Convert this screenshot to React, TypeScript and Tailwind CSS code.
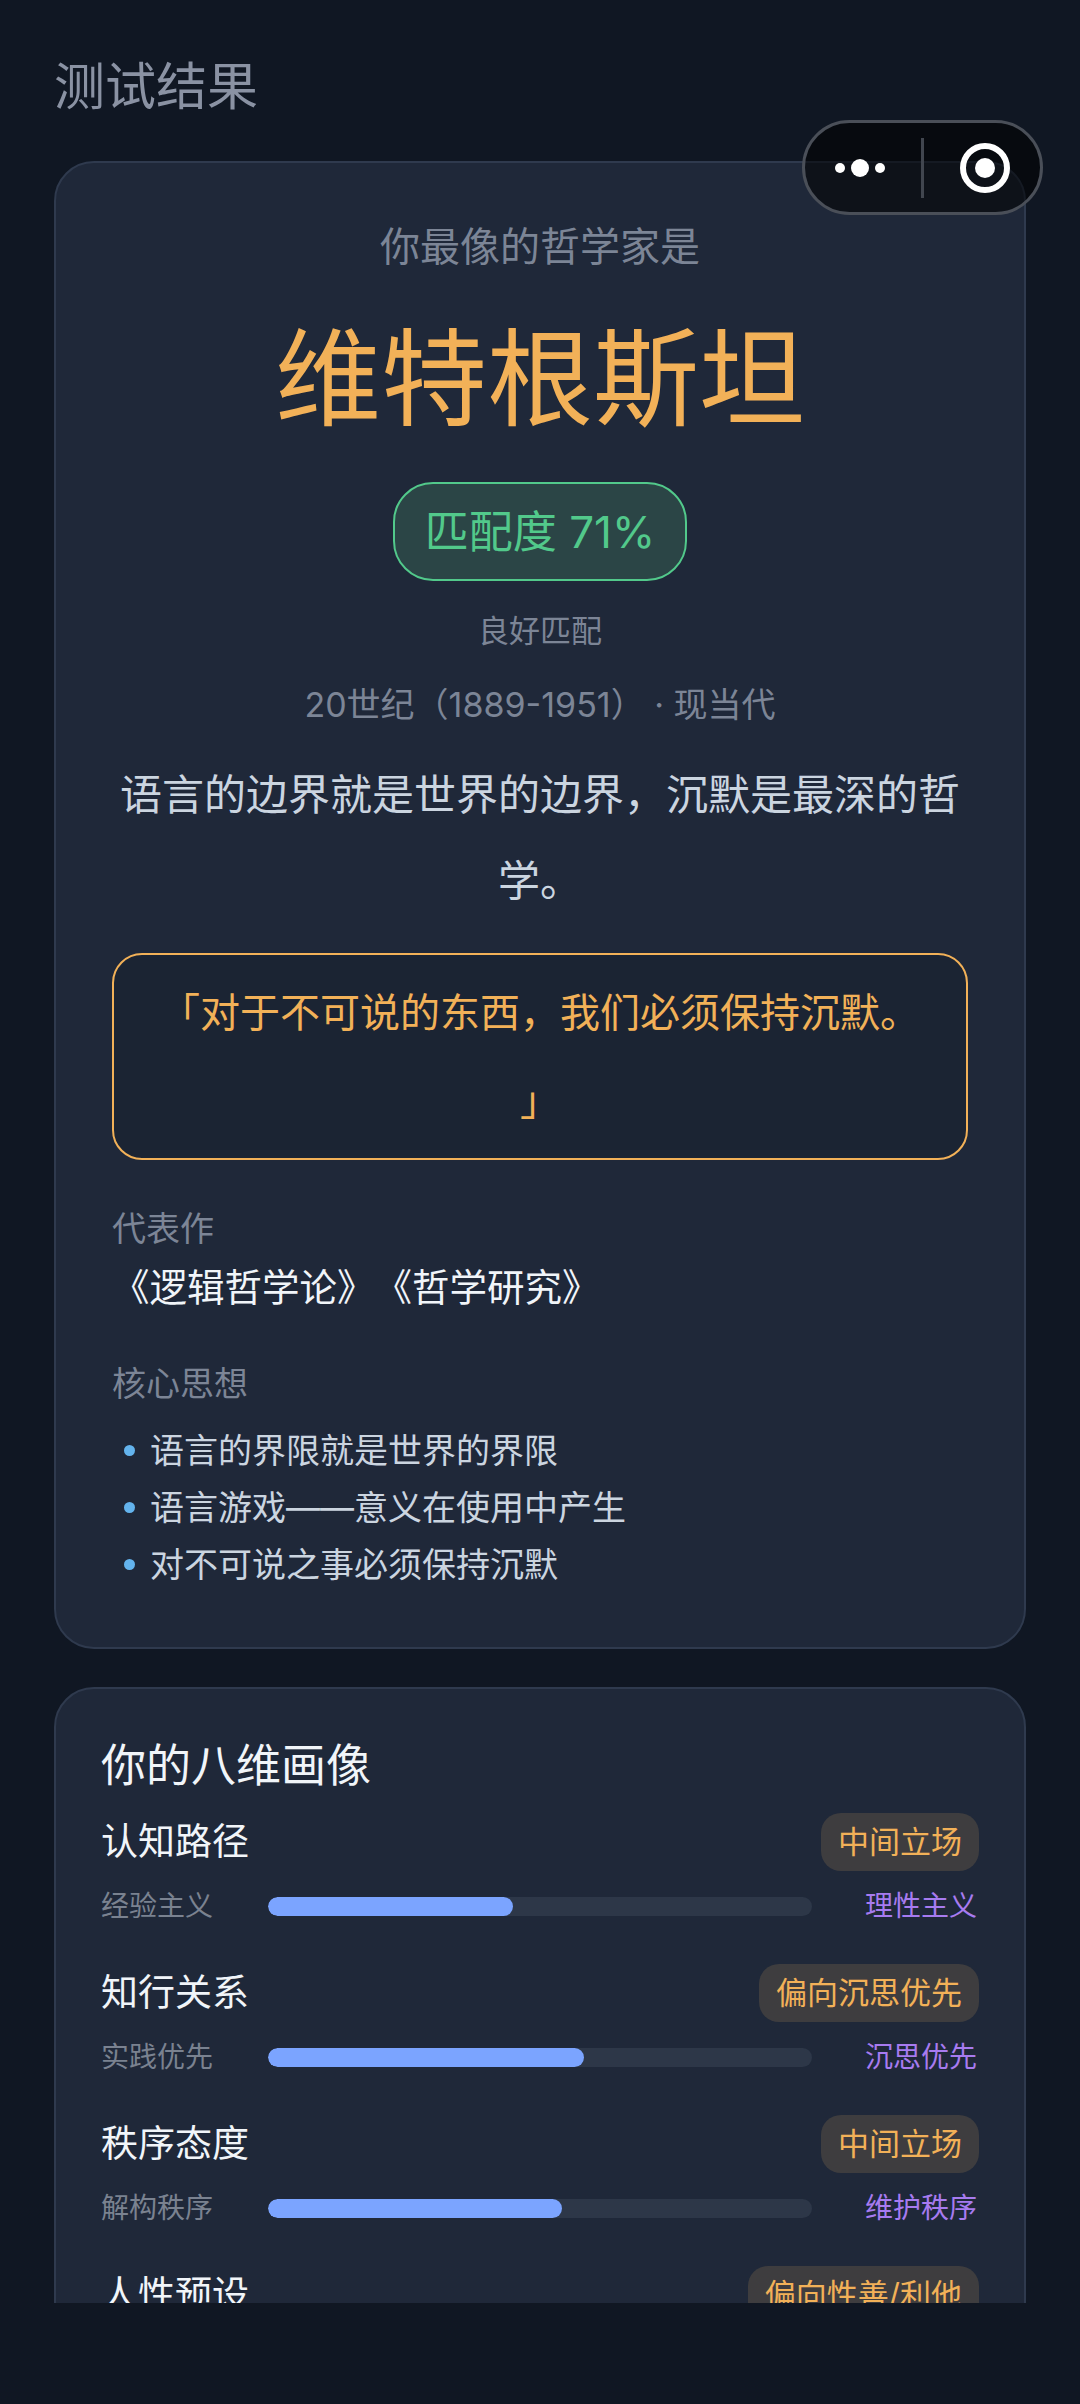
const dimensions = [
  { name: "认知路径", lean: "中间立场", left: "经验主义", right: "理性主义", fill: 45 },
  { name: "知行关系", lean: "偏向沉思优先", left: "实践优先", right: "沉思优先", fill: 58 },
  { name: "秩序态度", lean: "中间立场", left: "解构秩序", right: "维护秩序", fill: 54 },
  { name: "人性预设", lean: "偏向性善/利他", left: "性恶/利己", right: "性善/利他", fill: 60 },
];

const ideas = ["语言的界限就是世界的界限", "语言游戏——意义在使用中产生", "对不可说之事必须保持沉默"];

function Capsule() {
  return (
    <div className="absolute left-[802px] top-[120px] flex h-[95px] w-[241px] items-center rounded-full border-[3px] border-[#4a4f58] bg-black/55">
      <svg width="60" height="20" viewBox="0 0 60 20" className="ml-[25px]">
        <circle cx="10" cy="10" r="5" fill="#fff" />
        <circle cx="30" cy="10" r="9" fill="#fff" />
        <circle cx="50" cy="10" r="5" fill="#fff" />
      </svg>
      <div className="ml-[31px] h-[60px] w-[3px] bg-[#41464f]" />
      <svg width="50" height="50" viewBox="0 0 50 50" className="ml-[36px]">
        <circle cx="25" cy="25" r="22" fill="none" stroke="#fff" strokeWidth="6" />
        <circle cx="25" cy="25" r="10" fill="#fff" />
      </svg>
    </div>
  );
}

function DimensionRow({ d }: { d: (typeof dimensions)[number] }) {
  return (
    <div className="mb-[38px]">
      <div className="flex items-center justify-between">
        <span className="text-[37px] leading-[50px] text-[#f1f5f9]">{d.name}</span>
        <span className="flex h-[58px] items-center rounded-[20px] bg-[#3e3d3f] px-[17px] text-[31px] text-[#f2b158]">
          {d.lean}
        </span>
      </div>
      <div className="mt-[15px] flex h-[40px] items-center whitespace-nowrap">
        <span className="w-[112px] shrink-0 text-[28px] text-[#7a8290]">{d.left}</span>
        <div className="ml-[55px] h-[19px] w-[544px] shrink-0 overflow-hidden rounded-[10px] bg-[#2d3748]">
          <div className="h-full rounded-[10px] bg-[#7ba4ff]" style={{ width: `${d.fill}%` }} />
        </div>
        <span className="ml-[53px] w-[112px] shrink-0 text-[28px] text-[#a77bf0]">{d.right}</span>
      </div>
    </div>
  );
}

export default function App() {
  return (
    <div className="relative flex h-[2404px] w-[1080px] flex-col overflow-hidden bg-[#101723] font-['Inter','Noto_Sans_CJK_SC',sans-serif] [text-spacing-trim:space-all]">
      <div className="h-[2303px] shrink-0 overflow-hidden px-[54px] pt-[57px]">
        <h1 className="mb-[44px] text-[51px] font-normal leading-[60px] text-[#8a92a3]">测试结果</h1>

        <section className="rounded-[40px] border-2 border-[#2f3a4e] bg-[#1f2839] px-[56px] pb-[54px] pt-[56px]">
          <p className="text-center text-[40px] leading-[56px] text-[#7c8596]">你最像的哲学家是</p>
          <h2 className="mt-[44px] text-center text-[106px] font-normal leading-[120px] text-[#f2b158]">维特根斯坦</h2>
          <div className="mt-[43px] flex justify-center">
            <span className="flex h-[99px] w-[294px] items-center justify-center rounded-[40px] border-2 border-[#52c98b] bg-[#2b4546] text-[44px] text-[#52c98b]">
              匹配度 71%
            </span>
          </div>
          <p className="mt-[28px] text-center text-[31px] leading-[44px] text-[#7c8596]">良好匹配</p>
          <p className="mt-[27px] text-center text-[34px] leading-[50px] text-[#7c8596]">20世纪（1889-1951） · 现当代</p>
          <p className="mt-[22px] text-center text-[42px] leading-[86px] text-[#cbd5e0]">语言的边界就是世界的边界，沉默是最深的哲学。</p>

          <blockquote className="mt-[29px] rounded-[30px] border-2 border-[#f2b158] bg-[#1b2433] px-[40px] py-[13.5px] text-center text-[40px] leading-[88px] text-[#f2b158] [line-break:anywhere]">
            「对于不可说的东西，我们必须保持沉默。」
          </blockquote>

          <p className="mt-[46px] text-[34px] leading-[46px] text-[#7c8596]">代表作</p>
          <p className="mt-[11px] text-[37.5px] leading-[50px] text-[#f1f5f9]">《逻辑哲学论》《哲学研究》</p>
          <p className="mt-[48px] text-[34px] leading-[46px] text-[#7c8596]">核心思想</p>
          <ul className="mt-[15px]">
            {ideas.map((idea) => (
              <li key={idea} className="flex h-[57px] items-center text-[34px] text-[#cbd5e0]">
                <span className="ml-[12px] mr-[15px] h-[11px] w-[11px] rounded-full bg-[#63b3ed]" />
                {idea}
              </li>
            ))}
          </ul>
        </section>

        <section className="mt-[38px] rounded-t-[40px] border-2 border-[#2f3a4e] bg-[#1f2839] pl-[45px] pr-[45px] pt-[47px]">
          <h3 className="mb-[17px] text-[45px] font-normal leading-[60px] text-[#f1f5f9]">你的八维画像</h3>
          {dimensions.map((d) => (
            <DimensionRow key={d.name} d={d} />
          ))}
        </section>
      </div>
      <Capsule />
    </div>
  );
}
